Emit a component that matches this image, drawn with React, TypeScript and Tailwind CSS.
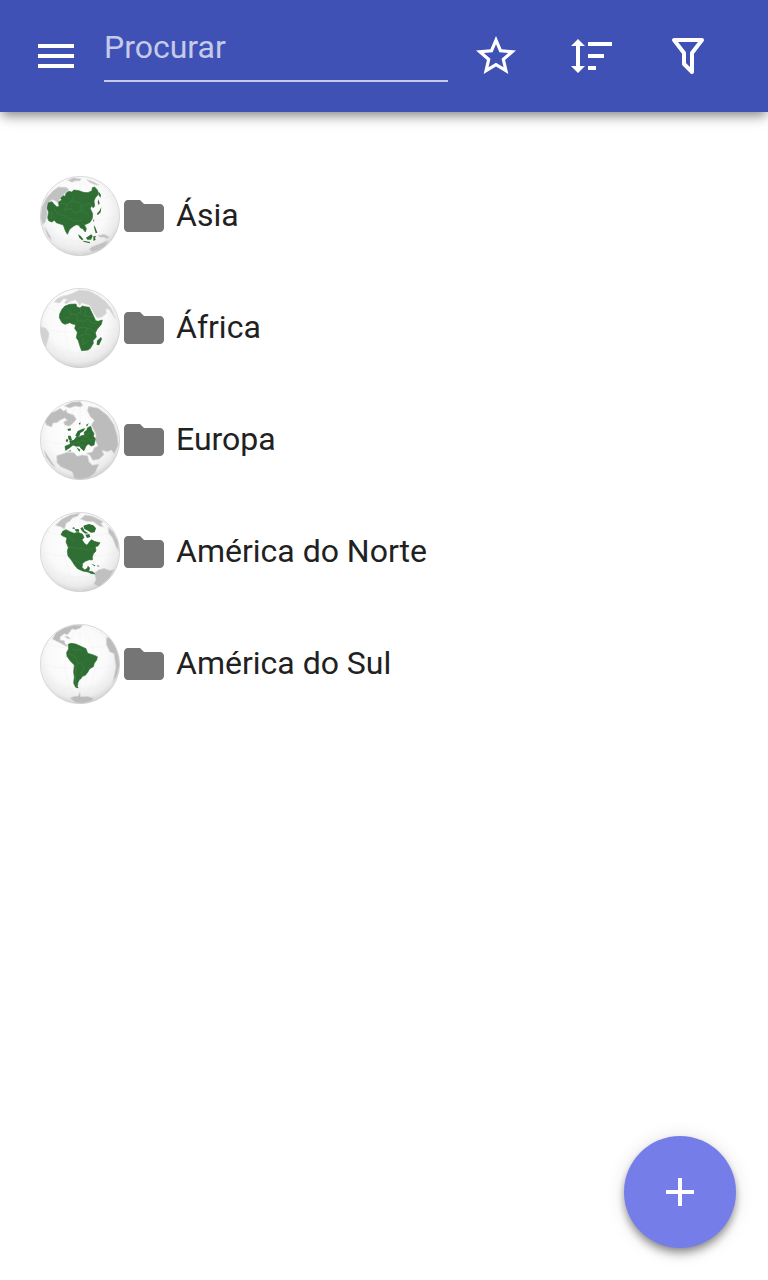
import { useState } from "react"

type Continent = {
  id: string
  name: string
  land: string
  islands: string
  gray: string
  grayFill: string
  borders: string
}

const continents: Continent[] = [
  {
    id: "asia",
    name: "Ásia",
    land: "M55 110 L66 107 L72 115 L80 122 L87 122 L86 108 L95 102 L92 96 L100 89 L106 91 L108 82 L116 76 L125 78 L132 72 L147 74 L160 79 L174 80 L186 74 L187 65 L194 63 L202 72 L206 82 L201 90 L196 95 L192 105 L194 121 L189 125 L184 119 L181 128 L188 143 L187 157 L180 169 L170 174 L163 176 L169 188 L166 198 L158 188 L151 185 L147 178 L139 176 L130 181 L119 190 L112 205 L106 194 L100 177 L88 173 L79 170 L73 163 L65 168 L56 164 L53 155 L56 139 L51 126 Z",
    islands:
      "M207 78 L213 87 L211 95 L205 86 Z M205 100 L209 112 L206 118 L203 108 Z M214 124 L212 139 L204 147 L200 144 L208 135 Z M190 160 L193 163 L190 169 Z M191 178 L196 184 L202 200 L197 202 L194 191 Z M144 205 L152 210 L160 220 L156 223 L148 215 Z M160 224 L180 228 L179 232 L160 227 Z M168 215 L184 205 L188 211 L183 221 L172 221 Z M190 211 L199 210 L195 215 L197 222 L190 224 Z",
    gray: "M68 75 L85 63 L108 64 L117 71 L107 80 L99 88 L88 101 L86 114 L76 104 L66 101 L58 106 L49 123 L52 143 L47 166 L38 177 L32 155 L36 123 L49 97 Z M113 43 L130 35 L154 39 L148 45 L137 44 L126 49 Z M169 40 L189 47 L207 57 L198 57 L179 49 Z M204 208 L223 205 L239 213 L232 218 L220 214 L209 214 Z M177 250 L186 242 L208 234 L220 229 L235 222 L226 242 L209 252 L187 258 Z M43 184 L48 189 L61 211 L65 225 L53 210 Z",
    grayFill: "#c2c2c2",
    borders:
      "M92 110 L112 116 L125 105 L147 110 L158 121 L177 112 L190 120 M101 132 L122 127 L134 142 L156 135 L177 146 M74 130 L83 144 L103 148 L116 158 L140 166 L158 162 M66 135 L63 159 M112 116 L105 131 M125 105 L132 89 M156 135 L153 118",
  },
  {
    id: "africa",
    name: "África",
    land: "M105 84 L119 79 L138 78 L140 86 L150 90 L157 84 L166 86 L178 88 L182 97 L189 111 L197 128 L204 130 L217 126 L214 139 L202 153 L196 164 L199 177 L189 188 L190 196 L181 211 L174 216 L155 218 L150 205 L145 188 L139 179 L142 163 L134 151 L137 140 L128 138 L119 134 L105 139 L96 134 L88 119 L89 108 L96 94 Z",
    islands: "M213 177 L216 183 L207 202 L200 200 L201 188 Z",
    gray: "M73 72 L82 62 L94 56 L113 51 L128 46 L149 36 L177 39 L202 52 L226 70 L244 92 L257 122 L247 109 L238 94 L227 92 L229 106 L216 117 L202 120 L193 108 L184 91 L179 82 L166 78 L155 74 L149 82 L137 65 L121 70 L110 77 L103 74 L112 63 L101 62 L89 75 Z M33 146 L47 151 L57 165 L55 181 L47 207 L37 190 L31 163 Z M98 260 L126 264 L174 263 L151 269 L121 268 Z",
    grayFill: "#d2d2d2",
    borders:
      "M110 91 L123 107 L139 109 L151 102 L153 90 M124 107 L117 119 L105 120 M139 109 L144 127 L137 137 M151 102 L166 115 L166 90 M166 115 L186 115 M144 127 L159 131 L176 123 L183 134 L199 136 M143 151 L157 147 L171 150 L183 154 M171 150 L166 168 L145 175 M166 168 L183 171 M160 178 L158 201 M176 187 L159 200 M183 154 L196 165",
  },
  {
    id: "europa",
    name: "Europa",
    land: "M105 169 L117 164 L121 160 L119 153 L132 151 L138 142 L147 141 L154 137 L164 135 L162 127 L170 121 L173 113 L182 109 L186 121 L192 131 L190 139 L196 146 L192 165 L184 168 L175 162 L168 168 L162 182 L155 177 L148 168 L139 169 L129 165 L118 174 L107 181 Z",
    islands:
      "M114 137 L122 137 L126 150 L120 153 L115 146 Z M110 146 L115 149 L112 157 L107 154 Z M136 137 L143 123 L158 116 L166 115 L160 124 L151 129 L148 139 L142 142 Z M112 117 L122 115 L123 121 L115 123 Z M146 100 L152 97 L150 105 Z M168 105 L176 100 L171 110 Z M139 172 L151 179 L148 185 Z M112 184 L122 181 L124 184 Z",
    gray: "M43 88 L61 70 L79 62 L91 55 L102 64 L108 58 L111 68 L132 76 L139 88 L129 100 L117 109 L104 105 L101 95 L112 91 L104 84 L90 91 L80 98 L69 99 L65 111 L49 105 Z M103 48 L126 36 L151 35 L158 46 L151 51 L136 48 L119 54 Z M176 49 L205 55 L232 76 L252 104 L262 137 L265 165 L253 192 L244 180 L232 185 L216 181 L222 194 L207 208 L188 211 L180 196 L169 190 L187 186 L193 173 L204 168 L196 151 L198 133 L190 117 L184 105 L193 91 L181 80 L172 61 Z M80 197 L112 187 L132 188 L142 199 L157 195 L173 197 L177 215 L187 226 L207 222 L195 249 L177 263 L154 268 L133 266 L127 246 L110 238 L93 231 L81 218 Z M42 180 L62 211 L78 235 L65 224 L48 201 Z",
    grayFill: "#bcbcbc",
    borders:
      "M122 162 L135 159 L148 158 L157 151 L169 154 M142 149 L149 165 L161 166 M158 137 L171 142 L180 151 L190 149 M168 136 L181 127",
  },
  {
    id: "america-do-norte",
    name: "América do Norte",
    land: "M98 88 L108 83 L120 89 L132 94 L144 91 L158 97 L162 107 L156 113 L163 124 L171 130 L178 120 L184 113 L193 118 L200 120 L210 122 L204 132 L196 134 L198 147 L190 155 L187 165 L187 174 L178 173 L166 178 L158 184 L156 196 L164 204 L172 199 L174 193 L179 198 L176 208 L187 209 L195 215 L185 215 L174 210 L158 207 L143 200 L134 190 L124 174 L114 162 L112 148 L115 136 L108 120 L111 107 L100 103 L93 98 Z",
    islands:
      "M160 71 L177 66 L190 70 L198 79 L194 91 L183 92 L174 86 L163 81 Z M151 79 L158 75 L163 86 L175 94 L166 95 L156 87 Z M134 82 L146 81 L148 89 L138 89 Z M166 98 L178 96 L181 105 L171 108 Z M183 185 L196 190 L194 193 Z M201 190 L209 192 L204 194 Z M126 79 L132 75 L135 82 Z",
    gray: "M76 70 L96 51 L122 38 L150 33 L142 43 L128 47 L119 58 L109 63 L103 82 L94 75 Z M151 51 L166 39 L188 43 L205 51 L220 59 L213 64 L220 75 L209 73 L190 59 L169 58 Z M193 214 L205 204 L222 199 L238 205 L253 203 L239 227 L220 244 L207 255 L191 246 L198 233 Z M235 75 L251 91 L264 118 L267 149 L258 134 L248 108 L236 93 Z",
    grayFill: "#c0c0c0",
    borders: "M116 136 L142 139 L158 139 L176 144 L190 137 M133 176 L144 179 L155 188 M112 92 L120 110 L132 114 M174 204 L181 211",
  },
  {
    id: "america-do-sul",
    name: "América do Sul",
    land: "M115 91 L123 88 L137 90 L146 94 L157 99 L168 104 L173 118 L188 122 L202 128 L200 138 L193 147 L190 158 L179 164 L173 175 L166 184 L157 187 L153 194 L149 196 L144 205 L142 218 L136 218 L131 207 L133 190 L131 174 L133 153 L121 141 L111 127 L110 115 L116 105 Z",
    islands: "M135 218 L144 219 L146 223 L138 221 Z",
    gray: "M67 75 L78 56 L102 42 L132 33 L159 34 L149 43 L137 47 L126 45 L120 53 L112 62 L103 59 L91 68 L90 78 L103 80 L106 91 L114 94 L108 97 L91 87 L80 82 Z M104 67 L112 67 L122 74 L113 74 Z M229 70 L241 73 L257 100 L266 125 L269 154 L262 183 L248 207 L253 184 L258 158 L252 119 L239 113 L229 91 Z M120 253 L132 247 L145 246 L149 234 L152 248 L171 247 L191 252 L185 262 L160 268 L137 266 Z",
    grayFill: "#bcbcbc",
    borders:
      "M122 98 L132 109 L148 106 L158 111 M115 122 L126 121 L137 131 L145 147 L139 157 M145 147 L158 151 L162 167 M138 158 L137 180 L136 210 M161 168 L153 174 L157 186",
  },
]

function Globe({ continent }: { continent: Continent }) {
  const fill = `sphere-${continent.id}`
  const clip = `clip-${continent.id}`
  return (
    <svg viewBox="30 30 240 240" className="size-20 shrink-0" aria-hidden="true">
      <defs>
        <radialGradient id={fill} cx="47%" cy="40%" r="62%">
          <stop offset="0" stopColor="#ffffff" />
          <stop offset="0.6" stopColor="#fafafa" />
          <stop offset="0.85" stopColor="#ebebeb" />
          <stop offset="1" stopColor="#cccccc" />
        </radialGradient>
        <clipPath id={clip}>
          <circle cx="150" cy="150" r="119" />
        </clipPath>
      </defs>
      <circle cx="150" cy="150" r="119" fill={`url(#${fill})`} />
      <g clipPath={`url(#${clip})`} strokeLinejoin="round">
        {/* grid lines */}
        <g fill="none" stroke="#ececec" strokeWidth="1">
          <path d="M31 150 Q150 180 269 150 M47 90 Q150 118 253 90 M47 210 Q150 240 253 210" />
          <path d="M150 31 V269 M150 31 Q60 150 150 269 M150 31 Q240 150 150 269" />
        </g>
        <path d={continent.gray} fill={continent.grayFill} stroke="#dcdcdc" strokeWidth="2" />
        <path d={continent.land} fill="#2f6f33" stroke="#2f6f33" strokeWidth="2" />
        <path d={continent.islands} fill="#2f6f33" />
        <path d={continent.borders} fill="none" stroke="#437f46" strokeWidth="2" />
      </g>
      <circle cx="150" cy="150" r="119" fill="none" stroke="#cccccc" strokeWidth="2" />
    </svg>
  )
}

export default function App() {
  const [search, setSearch] = useState("")

  return (
    <div className="min-h-screen bg-white font-['Roboto',sans-serif] text-[32px] leading-10 text-[#212121]">
      <header className="flex h-28 items-center bg-[#3f51b5] px-8 text-white shadow-[0_6px_10px_-2px_rgba(0,0,0,0.4),0_2px_20px_rgba(0,0,0,0.1)]">
        <button type="button" aria-label="Menu" className="mr-6">
          <svg viewBox="0 0 24 24" fill="currentColor" className="size-12">
            <path d="M3 18h18v-2H3v2zm0-5h18v-2H3v2zm0-7v2h18V6H3z" />
          </svg>
        </button>
        <input
          type="text"
          aria-label="Procurar"
          placeholder="Procurar"
          value={search}
          onChange={(e) => setSearch(e.target.value)}
          className="h-13 min-w-0 flex-1 rounded-none border-b-2 border-[#c5cae9] bg-transparent pb-4 outline-none placeholder:text-[#c5cae9]"
        />
        <button type="button" aria-label="Favoritos" className="flex w-24 justify-center">
          <svg viewBox="0 0 24 24" fill="currentColor" className="size-12">
            <path d="M22 9.24l-7.19-.62L12 2 9.19 8.63 2 9.24l5.46 4.73L5.82 21 12 17.27 18.18 21l-1.63-7.03L22 9.24zM12 15.4l-3.76 2.27 1-4.28-3.32-2.88 4.38-.38L12 6.1l1.71 4.04 4.38.38-3.32 2.88 1 4.28L12 15.4z" />
          </svg>
        </button>
        <button type="button" aria-label="Ordenar" className="flex w-24 justify-center">
          <svg viewBox="0 0 24 24" fill="currentColor" className="size-12">
            <path d="M10 13h8v-2h-8v2zm0 6h4v-2h-4v2zm0-12h12V5H10v2zM6 7h2.5L5 3.5 1.5 7H4v10H1.5L5 20.5 8.5 17H6V7z" />
          </svg>
        </button>
        <button type="button" aria-label="Filtrar" className="flex w-24 justify-center">
          <svg viewBox="0 0 24 24" fill="none" stroke="currentColor" strokeWidth="2" strokeLinejoin="round" className="size-12">
            <path d="M5 4H19L14 10.5V20L10 16V10.5Z" />
          </svg>
        </button>
      </header>

      <main className="pt-12">
        <ul>
          {continents.map((continent) => (
            <li key={continent.id}>
              <a href={`#${continent.id}`} className="flex h-28 items-center px-10">
                <Globe continent={continent} />
                <svg viewBox="0 0 24 24" fill="#757575" className="mr-2 size-12 shrink-0" aria-hidden="true">
                  <path d="M10 4H4c-1.1 0-1.99.9-1.99 2L2 18c0 1.1.9 2 2 2h16c1.1 0 2-.9 2-2V8c0-1.1-.9-2-2-2h-8l-2-2z" />
                </svg>
                <span className="pb-0.5">{continent.name}</span>
              </a>
            </li>
          ))}
        </ul>
      </main>

      <button
        type="button"
        aria-label="Adicionar"
        className="fixed right-8 bottom-8 flex size-28 items-center justify-center rounded-full bg-[#757de8] text-white shadow-[0_8px_10px_rgba(0,0,0,0.14),0_2px_20px_rgba(0,0,0,0.12),0_4px_8px_-2px_rgba(0,0,0,0.4)]"
      >
        <svg viewBox="0 0 24 24" fill="currentColor" className="size-12">
          <path d="M19 13h-6v6h-2v-6H5v-2h6V5h2v6h6v2z" />
        </svg>
      </button>
    </div>
  )
}
